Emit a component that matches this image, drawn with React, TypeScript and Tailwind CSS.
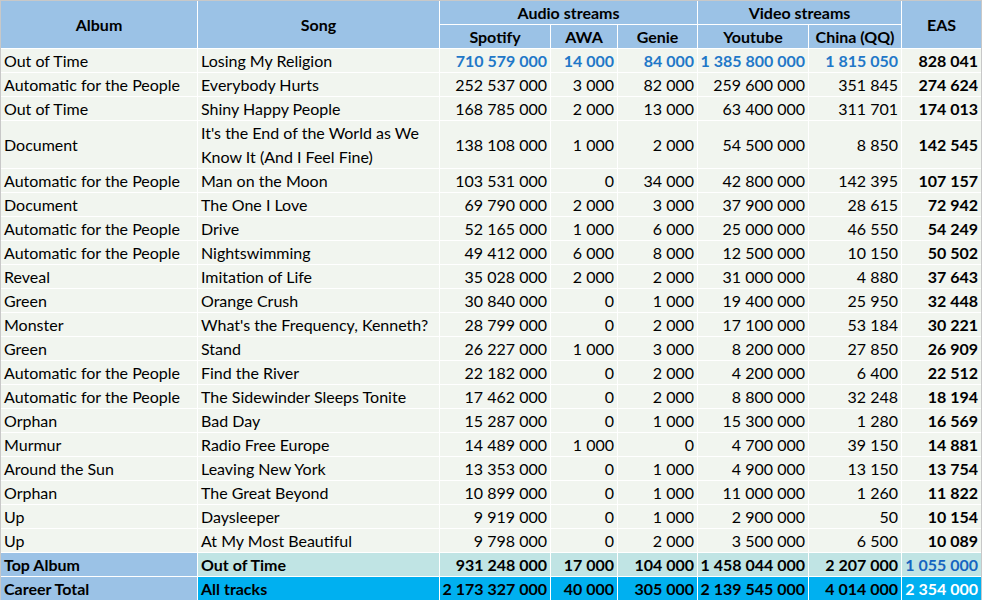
import React from "react";

type Row = {
  album: string;
  song: string;
  spotify: string;
  awa: string;
  genie: string;
  youtube: string;
  china: string;
  eas: string;
  tall?: boolean;
};

const ROWS: Row[] = [
  { album: "Out of Time", song: "Losing My Religion", spotify: "710 579 000", awa: "14 000", genie: "84 000", youtube: "1 385 800 000", china: "1 815 050", eas: "828 041" },
  { album: "Automatic for the People", song: "Everybody Hurts", spotify: "252 537 000", awa: "3 000", genie: "82 000", youtube: "259 600 000", china: "351 845", eas: "274 624" },
  { album: "Out of Time", song: "Shiny Happy People", spotify: "168 785 000", awa: "2 000", genie: "13 000", youtube: "63 400 000", china: "311 701", eas: "174 013" },
  { album: "Document", song: "It's the End of the World as We Know It (And I Feel Fine)", spotify: "138 108 000", awa: "1 000", genie: "2 000", youtube: "54 500 000", china: "8 850", eas: "142 545", tall: true },
  { album: "Automatic for the People", song: "Man on the Moon", spotify: "103 531 000", awa: "0", genie: "34 000", youtube: "42 800 000", china: "142 395", eas: "107 157" },
  { album: "Document", song: "The One I Love", spotify: "69 790 000", awa: "2 000", genie: "3 000", youtube: "37 900 000", china: "28 615", eas: "72 942" },
  { album: "Automatic for the People", song: "Drive", spotify: "52 165 000", awa: "1 000", genie: "6 000", youtube: "25 000 000", china: "46 550", eas: "54 249" },
  { album: "Automatic for the People", song: "Nightswimming", spotify: "49 412 000", awa: "6 000", genie: "8 000", youtube: "12 500 000", china: "10 150", eas: "50 502" },
  { album: "Reveal", song: "Imitation of Life", spotify: "35 028 000", awa: "2 000", genie: "2 000", youtube: "31 000 000", china: "4 880", eas: "37 643" },
  { album: "Green", song: "Orange Crush", spotify: "30 840 000", awa: "0", genie: "1 000", youtube: "19 400 000", china: "25 950", eas: "32 448" },
  { album: "Monster", song: "What's the Frequency, Kenneth?", spotify: "28 799 000", awa: "0", genie: "2 000", youtube: "17 100 000", china: "53 184", eas: "30 221" },
  { album: "Green", song: "Stand", spotify: "26 227 000", awa: "1 000", genie: "3 000", youtube: "8 200 000", china: "27 850", eas: "26 909" },
  { album: "Automatic for the People", song: "Find the River", spotify: "22 182 000", awa: "0", genie: "2 000", youtube: "4 200 000", china: "6 400", eas: "22 512" },
  { album: "Automatic for the People", song: "The Sidewinder Sleeps Tonite", spotify: "17 462 000", awa: "0", genie: "2 000", youtube: "8 800 000", china: "32 248", eas: "18 194" },
  { album: "Orphan", song: "Bad Day", spotify: "15 287 000", awa: "0", genie: "1 000", youtube: "15 300 000", china: "1 280", eas: "16 569" },
  { album: "Murmur", song: "Radio Free Europe", spotify: "14 489 000", awa: "1 000", genie: "0", youtube: "4 700 000", china: "39 150", eas: "14 881" },
  { album: "Around the Sun", song: "Leaving New York", spotify: "13 353 000", awa: "0", genie: "1 000", youtube: "4 900 000", china: "13 150", eas: "13 754" },
  { album: "Orphan", song: "The Great Beyond", spotify: "10 899 000", awa: "0", genie: "1 000", youtube: "11 000 000", china: "1 260", eas: "11 822" },
  { album: "Up", song: "Daysleeper", spotify: "9 919 000", awa: "0", genie: "1 000", youtube: "2 900 000", china: "50", eas: "10 154" },
  { album: "Up", song: "At My Most Beautiful", spotify: "9 798 000", awa: "0", genie: "2 000", youtube: "3 500 000", china: "6 500", eas: "10 089" },
];

const head = "flex items-center justify-center bg-[#9bc2e6] font-bold text-black";
const text = "flex items-center px-[3px] pt-px";
const num = "flex items-center justify-end pr-[3px] pt-px whitespace-nowrap";

function DataRow({ row, top }: { row: Row; top: boolean }) {
  const bg = "bg-[#f1f5ef]";
  const h = row.tall ? "h-[47px]" : "h-[23px]";
  const blue = top ? "font-bold text-[#1f78c8]" : "text-black";
  return (
    <>
      <div className={`${text} ${bg} ${h}`}>{row.album}</div>
      <div className={`${text} ${bg} ${h} leading-[24px]`}>{row.song}</div>
      <div className={`${num} ${bg} ${h} ${blue}`}>{row.spotify}</div>
      <div className={`${num} ${bg} ${h} ${blue}`}>{row.awa}</div>
      <div className={`${num} ${bg} ${h} ${blue}`}>{row.genie}</div>
      <div className={`${num} ${bg} ${h} ${blue}`}>{row.youtube}</div>
      <div className={`${num} ${bg} ${h} ${blue}`}>{row.china}</div>
      <div className={`${num} ${bg} ${h} font-bold text-black`}>{row.eas}</div>
    </>
  );
}

export default function App() {
  return (
    <div className="h-[601px] w-[982px] bg-white font-['Lato','Liberation_Sans',sans-serif] text-[16px] leading-none text-black">
      <div className="grid grid-cols-[196px_241px_110px_66px_79px_110px_92px_79px] gap-px border-x border-t border-[#c8c8c8] bg-white">
        {/* header */}
        <div className={`${head} row-span-2`}>Album</div>
        <div className={`${head} row-span-2`}>Song</div>
        <div className={`${head} col-span-3 h-[23px]`}>Audio streams</div>
        <div className={`${head} col-span-2 h-[23px]`}>Video streams</div>
        <div className={`${head} row-span-2`}>EAS</div>
        <div className={`${head} h-[23px]`}>Spotify</div>
        <div className={`${head} h-[23px]`}>AWA</div>
        <div className={`${head} h-[23px]`}>Genie</div>
        <div className={`${head} h-[23px]`}>Youtube</div>
        <div className={`${head} h-[23px]`}>China (QQ)</div>

        {ROWS.map((r, i) => (
          <DataRow key={r.song} row={r} top={i === 0} />
        ))}

        {/* totals */}
        <div className={`${text} h-[23px] bg-[#9bc2e6] font-bold`}>Top Album</div>
        <div className={`${text} h-[23px] bg-[#c0e4e4] font-bold`}>Out of Time</div>
        <div className={`${num} bg-[#c0e4e4] font-bold`}>931 248 000</div>
        <div className={`${num} bg-[#c0e4e4] font-bold`}>17 000</div>
        <div className={`${num} bg-[#c0e4e4] font-bold`}>104 000</div>
        <div className={`${num} bg-[#c0e4e4] font-bold`}>1 458 044 000</div>
        <div className={`${num} bg-[#c0e4e4] font-bold`}>2 207 000</div>
        <div className={`${num} bg-[#c0e4e4] font-bold text-[#1565c0]`}>1 055 000</div>

        <div className={`${text} h-[23px] bg-[#9bc2e6] font-bold`}>Career Total</div>
        <div className={`${text} h-[23px] bg-[#00b0f0] font-bold`}>All tracks</div>
        <div className={`${num} bg-[#00b0f0] font-bold`}>2 173 327 000</div>
        <div className={`${num} bg-[#00b0f0] font-bold`}>40 000</div>
        <div className={`${num} bg-[#00b0f0] font-bold`}>305 000</div>
        <div className={`${num} bg-[#00b0f0] font-bold`}>2 139 545 000</div>
        <div className={`${num} bg-[#00b0f0] font-bold`}>4 014 000</div>
        <div className={`${num} bg-[#00b0f0] font-bold text-white`}>2 354 000</div>
      </div>
    </div>
  );
}
